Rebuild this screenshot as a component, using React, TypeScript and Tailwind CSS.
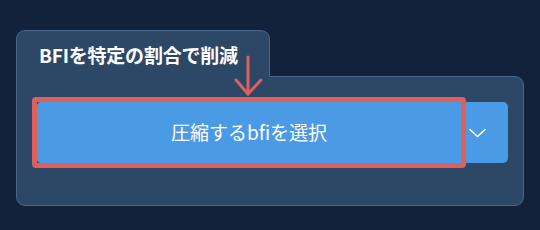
import React from 'react';

function ChevronDown() {
    return (
        <svg width="17" height="10" viewBox="0 0 17 10" fill="none" stroke="white" strokeWidth="1.6" strokeLinecap="round" strokeLinejoin="round">
            <path d="M1 1.5 L8.5 8.5 L16 1.5" />
        </svg>
    );
}

export default function App() {
    return (
        <div
            className="relative w-[540px] h-[230px] bg-[#12223a] pt-[30px] pl-[16px] overflow-hidden"
            style={{ fontFamily: '"Noto Sans CJK JP", "Noto Sans", sans-serif' }}
        >
            {/* Tab header */}
            <div className="relative z-10 w-[254px] h-[47px] -mb-px bg-[#2d4867] border border-b-0 border-[#4b6688] rounded-t-[9px] pl-[22px] pt-[11px]">
                <h2 className="text-[19px] leading-[26px] font-bold text-white tracking-[-0.2px]">BFIを特定の割合で削減</h2>
            </div>

            {/* Panel */}
            <div className="w-[508px] h-[130px] bg-[#2d4867] border border-[#4b6688] rounded-b-[9px] rounded-tr-[9px] pt-[25px] pl-[20px]">
                <div className="flex h-[61px] w-[471px]">
                    <div className="relative w-[424px] bg-[#4a9ae5] rounded-l flex items-center justify-center">
                        <span className="text-[19px] text-white font-normal">圧縮するbfiを選択</span>
                        <div className="absolute -inset-[5px] border-[5px] border-[#df605b] rounded-[4px]" />
                    </div>
                    <button className="flex-1 bg-[#4a9ae5] rounded-r-[5px] flex items-center pl-[8px]">
                        <ChevronDown />
                    </button>
                </div>
            </div>

            {/* Annotation arrow */}
            <svg className="absolute z-20 left-[232px] top-[54px]" width="34" height="44" viewBox="0 0 34 44" fill="none" stroke="#df605b" strokeWidth="3" strokeLinecap="round" strokeLinejoin="round">
                <path d="M16 3 L16 40" />
                <path d="M4 26 L16 40 L29 26" />
            </svg>
        </div>
    );
}
